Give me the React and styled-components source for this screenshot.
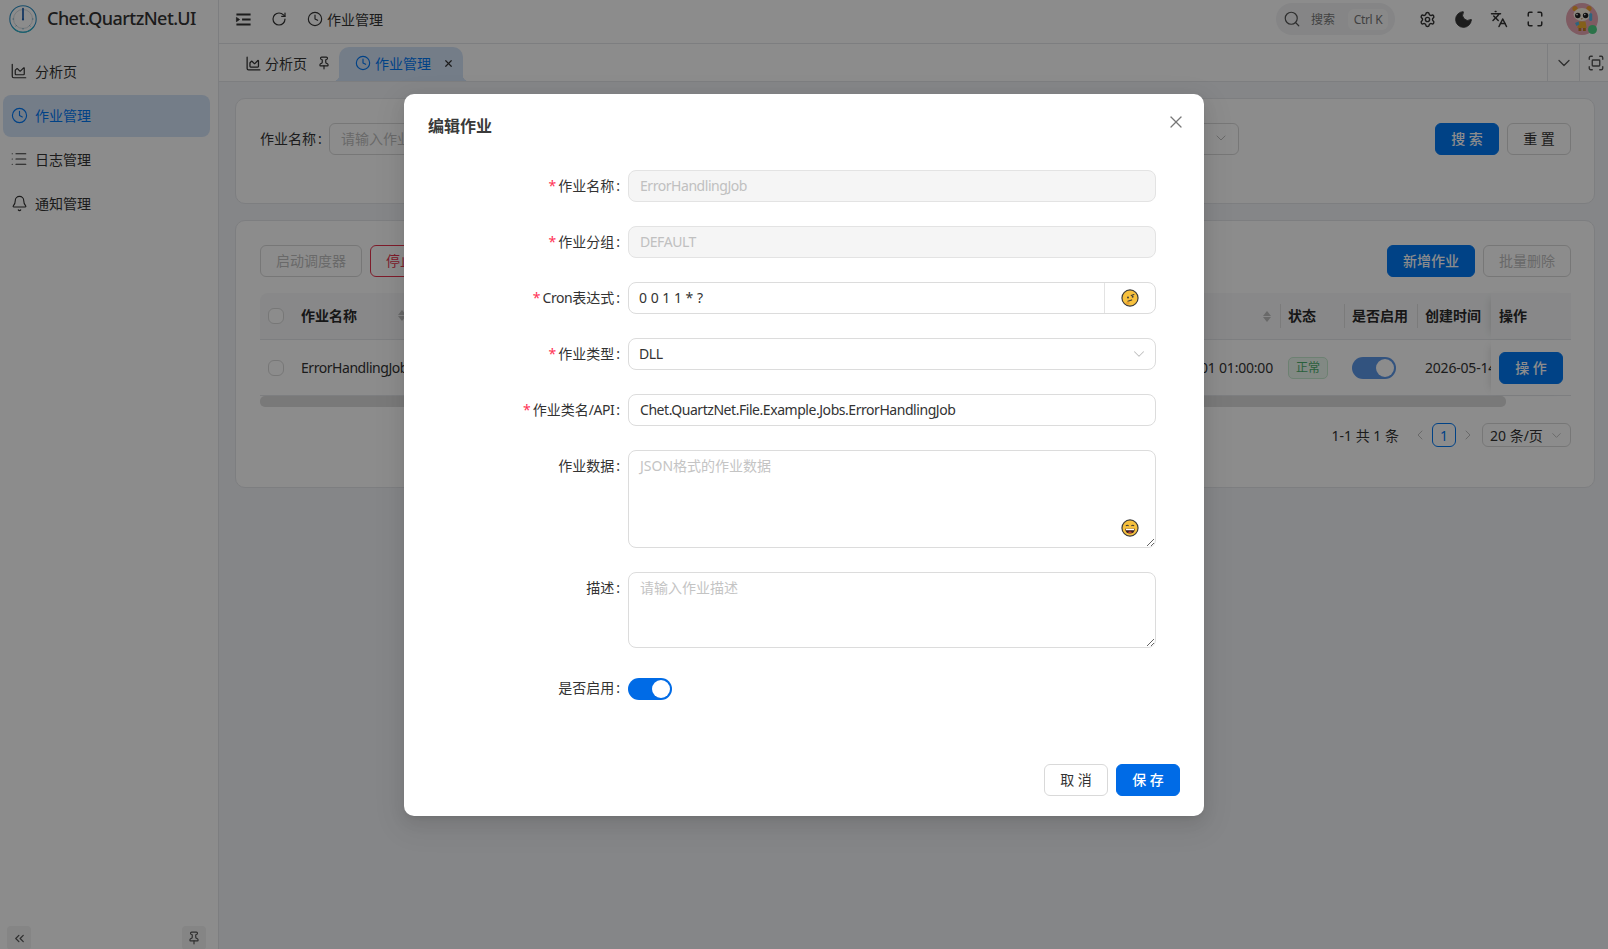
import React from 'react';
import styled, { createGlobalStyle } from 'styled-components';
import { ChartArea, Clock, List, Bell, RotateCw, Pin, Search, Settings, Moon, Languages, Maximize, Fullscreen, ChevronsLeft, ChevronDown, ChevronLeft, ChevronRight, X } from 'lucide-react';

const FONT = `"Noto Sans", "Noto Sans CJK SC", sans-serif`;
const PRIMARY = '#006be6';
const PRIMARY_BG = '#0078f5';
const TIGHT = '-0.45px';

const Global = createGlobalStyle`
  html, body { margin: 0; height: 100%; overflow: hidden; }
  #root { height: 100%; }
  * { box-sizing: border-box; }
  body { font-family: ${FONT}; font-size: 14px; color: #333; background: #f2f4f7; }
  input, textarea { font-family: ${FONT}; }
`;

const Shell = styled.div`display: flex; height: 949px; position: relative; overflow: hidden;`;
const Sidebar = styled.aside`
  width: 219px; flex: none; background: #fff; border-right: 1px solid #e4e6ea;
  display: flex; flex-direction: column; height: 100%;
`;
const Brand = styled.div`height: 51px; padding: 5px 0 0 9px; display: flex; align-items: flex-start; gap: 10px;`;
const BrandName = styled.div`font-size: 18px; font-weight: 500; line-height: 26px; color: #333; letter-spacing: -0.55px;`;
const NavList = styled.nav`display: flex; flex-direction: column; gap: 2px; padding: 0 8px 0 3px; flex: 1;`;
const NavItem = styled.div`
  height: 42px; display: flex; align-items: center; gap: 9px; padding: 0 0 2px 9px; border-radius: 8px;
  background: ${p => p.$active ? '#d4e3f8' : 'transparent'};
  color: ${p => p.$active ? PRIMARY_BG : '#333'};
`;
const IconSlot = styled.span`width: 14px; flex: none; display: flex; justify-content: center; svg { flex: none; }`;
const SideFoot = styled.div`display: flex; justify-content: space-between; padding: 0 12px 0 7px; height: 23px;`;
const FootBtn = styled.div`
  width: 24px; height: 24px; border-radius: 4px; background: #f2f2f2; color: #555;
  display: flex; align-items: center; justify-content: center;
`;

const Main = styled.div`flex: 1; min-width: 0; display: flex; flex-direction: column;`;
const Header = styled.header`
  height: 44px; flex: none; background: #fff; border-bottom: 1px solid #e4e6ea;
  display: flex; align-items: center; padding: 0 10px 5px 6px;
`;
const HeadIcon = styled.div`
  width: 36px; display: flex; align-items: center; justify-content: center; color: #333; flex: none;
`;
const Crumb = styled.div`display: flex; align-items: center; gap: 4px; margin-left: 10px; color: #333; padding-bottom: 1px;`;
const Spacer = styled.div`flex: 1;`;
const SearchPill = styled.div`
  width: 119px; height: 32px; border-radius: 16px; background: #f2f3f5; display: flex; align-items: center;
  padding: 0 7px 0 7px; margin-right: 14px; color: #555;
`;
const SearchText = styled.span`font-size: 12px; margin-left: 10px; color: #777;`;
const Kbd = styled.span`
  margin-left: auto; width: 40px; height: 21px; border-radius: 6px; background: #fafafa; color: #777; font-size: 12px;
  display: flex; align-items: center; justify-content: center; white-space: nowrap; letter-spacing: -.3px;
`;
const AvatarWrap = styled.div`position: relative; width: 32px; height: 32px; margin-left: 13px; flex: none;`;
const AvatarDot = styled.span`
  position: absolute; right: 1px; bottom: 1px; width: 9px; height: 9px; border-radius: 50%; background: #4fd186;
`;

const TabBar = styled.div`height: 38px; flex: none; background: #fff; border-bottom: 1px solid #e4e6ea; display: flex; align-items: flex-end;`;
const Tabs = styled.div`flex: 1; display: flex; align-items: flex-end; padding-left: 27px; height: 100%;`;
const PlainTab = styled.div`display: flex; align-items: center; height: 34px; gap: 5px; width: 93px; padding-bottom: 2px; color: #333;`;
const ActiveTab = styled.div`
  position: relative; height: 34px; width: 124px; background: #d4e3f8; color: ${PRIMARY_BG}; display: flex; align-items: center;
  padding: 0 0 2px 17px; gap: 5px; border-radius: 10px 10px 0 0;
  &::before, &::after { content: ''; position: absolute; bottom: 0; width: 6px; height: 6px; }
  &::before { left: -6px; background: radial-gradient(circle at 0 0, transparent 6px, #d4e3f8 6.5px); }
  &::after { right: -6px; background: radial-gradient(circle at 100% 0, transparent 6px, #d4e3f8 6.5px); }
`;
const TabClose = styled.span`position: absolute; right: 9px; top: 11px; color: #333; display: flex;`;
const TabTool = styled.div`
  width: ${p => p.$w}px; height: 100%; border-left: 1px solid #e4e6ea; display: flex; align-items: center; justify-content: center; color: #555; flex: none;
  padding-left: ${p => p.$pl || 0}px;
`;

const Content = styled.main`flex: 1; padding: 16px 13px 0 16px; display: flex; flex-direction: column; gap: 16px; min-height: 0;`;
const Card = styled.section`
  background: #fff; border: 1px solid #e4e6ea; border-radius: 10px; padding: 24px 23px 24px 24px; height: ${p => p.$h}px;
`;
const FilterRow = styled.div`display: flex; align-items: center; gap: 8px;`;
const FilterLabel = styled.span`white-space: nowrap; width: 65px; margin-right: -4px; flex: none; color: #333; padding-bottom: 2px;`;
const FilterInput = styled.div`
  flex: 1; height: 32px; border: 1px solid #d9d9d9; border-radius: 6px; padding: 0 9px 2px 11px; color: #bfbfbf;
  display: flex; justify-content: space-between; align-items: center; white-space: nowrap;
`;
const FilterGap = styled.div`width: ${p => p.$w}px; flex: none;`;
const Btn = styled.button`
  height: 32px; width: ${p => p.$w || 64}px; flex: none; border-radius: 6px; font: 14px ${FONT}; padding: 0 0 2px; cursor: pointer;
  font-weight: ${p => p.$primary ? 500 : 400};
  background: ${p => p.$primary ? (p.$modal ? PRIMARY : PRIMARY_BG) : '#fff'};
  color: ${p => p.$primary ? '#fff' : p.$danger ? '#e5344f' : p.$disabled ? '#bfbfbf' : '#333'};
  border: 1px solid ${p => p.$primary ? (p.$modal ? PRIMARY : PRIMARY_BG) : p.$danger ? '#e5344f' : '#d9d9d9'};
`;
const Toolbar = styled.div`display: flex; align-items: center; gap: 8px; margin-bottom: 16px;`;
const GridRow = styled.div`
  display: grid; grid-template-columns: 33px 123px minmax(0, 1fr) 64px 73px 74px 80px;
  height: ${p => p.$h}px; align-items: center; border-bottom: 1px solid #e4e6ea;
  background: ${p => p.$head ? '#f7f8f9' : '#fff'}; border-radius: ${p => p.$head ? '8px 8px 0 0' : '0'};
`;
const Cell = styled.div`
  padding-left: ${p => p.$pl ?? 8}px; padding-bottom: ${p => p.$head ? 2 : 0}px; white-space: nowrap; overflow: hidden; height: 100%; display: flex; align-items: center;
  position: relative; font-weight: ${p => p.$head ? 600 : 400}; color: ${p => p.$head ? '#2b2b2b' : '#333'};
  justify-content: ${p => p.$end ? 'flex-end' : 'flex-start'};
  letter-spacing: ${p => p.$tight ? TIGHT : p.$digits ? '-.2px' : 'normal'};
`;
const HeadSep = styled.span`position: absolute; left: 0; top: 11px; bottom: 11px; width: 1px; background: #e0e0e0;`;
const Fixed = styled(Cell)`
  overflow: visible; box-shadow: -6px 0 8px -6px rgba(0,0,0,.15); background: ${p => p.$head ? '#f7f8f9' : '#fff'};
`;
const Check = styled.span`width: 16px; height: 16px; border: 1px solid #d9d9d9; border-radius: 6px; background: #fff; display: block; margin-left: 8px;`;
const Sorter = styled.span`display: flex; flex-direction: column; margin-left: auto; margin-right: ${p => p.$mr}px; gap: 1px;`;
const Caret = styled.span`
  width: 0; height: 0; border-left: 4.5px solid transparent; border-right: 4.5px solid transparent;
  ${p => p.$up ? 'border-bottom: 5px solid #bfbfbf;' : 'border-top: 5px solid #bfbfbf;'}
`;
const NextFire = styled.span`margin-right: 7px;`;
const Tag = styled.span`
  width: 40px; height: 22px; border: 1px solid #c6ecd0; background: #edf9f0; color: #4caf6e; font-size: 12px; border-radius: 5px; padding-bottom: 1px;
  display: flex; align-items: center; justify-content: center;
`;
const Track = styled.span`
  width: 44px; height: 22px; border-radius: 11px; background: ${p => p.$soft ? '#5c97e8' : PRIMARY};
  display: flex; align-items: center; justify-content: flex-end; padding-right: 2px; flex: none;
`;
const Knob = styled.span`width: 18px; height: 18px; border-radius: 50%; background: #fff;`;
const ScrollTrack = styled.div`height: 11px; margin-right: 65px; background: #dcdcdc; border-radius: 5px;`;
const Pager = styled.div`display: flex; align-items: center; height: 24px; margin-top: 16px; justify-content: flex-end; color: #333;`;
const PagerText = styled.span`margin-right: 9px;`;
const PagerNav = styled.span`width: 24px; display: flex; justify-content: center; color: #bfbfbf;`;
const PageNum = styled.span`
  width: 24px; height: 24px; border: 1px solid ${PRIMARY_BG}; border-radius: 6px; color: ${PRIMARY_BG};
  display: flex; align-items: center; justify-content: center;
`;
const PageSize = styled.span`
  width: 89px; height: 24px; border: 1px solid #d9d9d9; border-radius: 6px; margin-left: 2px; padding: 0 6px 0 7px;
  display: flex; align-items: center; justify-content: space-between; white-space: nowrap;
`;

const Mask = styled.div`position: absolute; inset: 0; background: rgba(0,0,0,.45);`;
const Modal = styled.div`
  position: absolute; left: 404px; top: 94px; width: 800px; height: 722px; background: #fff; border-radius: 10px;
  box-shadow: 0 6px 16px rgba(0,0,0,.08), 0 3px 6px -4px rgba(0,0,0,.12), 0 9px 28px 8px rgba(0,0,0,.05);
  padding: 20px 24px; display: flex; flex-direction: column;
`;
const ModalClose = styled.span`position: absolute; right: 18px; top: 18px; color: #777; display: flex;`;
const ModalTitle = styled.h2`margin: 0; font-size: 16px; font-weight: 600; line-height: 24px; color: #3a3a3a;`;
const Form = styled.div`margin-top: 32px; display: flex; flex-direction: column; gap: 24px; flex: 1;`;
const FormRow = styled.div`display: grid; grid-template-columns: 192px 528px; column-gap: 8px; align-items: start;`;
const Label = styled.label`text-align: right; line-height: 32px; color: #333; white-space: nowrap;`;
const Req = styled.span`color: #ff3355; margin-right: 2px;`;
const Colon = styled.span`margin-left: 2px;`;
const Latin = styled.span`letter-spacing: ${TIGHT};`;
const TextField = styled.input`
  width: 100%; height: 32px; border: 1px solid ${p => p.disabled ? '#e3e3e3' : '#dcdcdc'}; border-radius: 8px; padding: 0 10px 1px 11px; font-size: 14px; outline: none;
  background: ${p => p.disabled ? '#f5f5f5' : '#fff'}; color: ${p => p.disabled ? '#c0c0c0' : '#333'}; letter-spacing: ${TIGHT};
  &:disabled { -webkit-text-fill-color: #c0c0c0; }
`;
const Group = styled.div`display: flex; height: 32px; border: 1px solid #dcdcdc; border-radius: 8px;`;
const GroupInput = styled.input`flex: 1; min-width: 0; border: 0; outline: none; background: transparent; padding: 0 10px 1px; font-size: 14px; color: #333;`;
const Addon = styled.div`width: 51px; border-left: 1px solid #e3e3e3; display: flex; align-items: center; justify-content: center;`;
const SelectBox = styled.div`
  height: 32px; border: 1px solid #dcdcdc; border-radius: 8px; padding: 0 7px 1px 10px; display: flex; align-items: center; justify-content: space-between; color: #333;
`;
const AreaWrap = styled.div`position: relative; height: ${p => p.$h}px;`;
const Area = styled.textarea`
  display: block; width: 100%; height: 100%; border: 1px solid #dcdcdc; border-radius: 8px; padding: 4px 11px; font-size: 14px; line-height: 22px; outline: none; resize: vertical; color: #333;
  &::placeholder { color: #c4c4c4; }
`;
const AreaEmoji = styled.span`position: absolute; right: 17px; bottom: 11px; display: flex;`;
const SwitchSlot = styled.div`height: 32px; padding-top: 1px; display: flex; align-items: center;`;
const Footer = styled.div`display: flex; justify-content: flex-end; gap: 8px;`;

const Logo = () => (
  <svg width="28" height="28" viewBox="0 0 28 28" fill="none" style={{ flex: 'none' }}>
    <circle cx="14" cy="14" r="13.2" stroke="#2b8fc4" strokeWidth="1.1" />
    <path d="M3.5 22a13 13 0 0 0 21 0" stroke="#35b6c9" strokeWidth="1.2" />
    <circle cx="14" cy="14" r="9.5" stroke="#b8c6cf" strokeWidth=".6" />
    <path d="M14 24.5v-1.6M3.5 14h1.6M24.5 14h-1.6M6.6 21.4l1.1-1.1M21.4 21.4l-1.1-1.1" stroke="#5f9fc0" strokeWidth=".8" />
    <path d="M14 3.5V14" stroke="#1d5fb0" strokeWidth="1.7" strokeLinecap="round" />
    <circle cx="14" cy="14.4" r="1.1" fill="#1d5fb0" />
  </svg>
);

const MenuFold = () => (
  <svg width="17" height="17" viewBox="0 0 24 24" fill="none" stroke="#333" strokeWidth="2.6">
    <path d="M2 5h20M10 12h12M2 19h20" />
    <path d="M2 9l4.5 3L2 15z" fill="#333" strokeWidth="1" />
  </svg>
);

const Avatar = () => (
  <svg width="32" height="32" viewBox="0 0 32 32">
    <circle cx="16" cy="16" r="16" fill="#e8a6b2" />
    <circle cx="9" cy="5.5" r="2.6" fill="#f2a530" />
    <circle cx="23" cy="5.5" r="2.6" fill="#f2a530" />
    <ellipse cx="16" cy="11.5" rx="8.5" ry="6.5" fill="#fbf4e4" />
    <circle cx="11.8" cy="12.5" r="2.7" fill="#1f1f1f" />
    <circle cx="19.6" cy="12.5" r="2.7" fill="#1f1f1f" />
    <circle cx="11" cy="11.6" r=".8" fill="#fff" />
    <circle cx="18.8" cy="11.6" r=".8" fill="#fff" />
    <path d="M14.6 15.4h2.4l-1.2 1.2z" fill="#a5541e" />
    <path d="M12.5 18.5h7l1.2 6.5h-9.4z" fill="#f0b030" />
    <path d="M9 20l3.5-1.5 1 3-3 1.5z" fill="#53b6e6" />
    <rect x="23.2" y="10" width="3" height="8" rx="1.5" fill="#53b6e6" />
    <path d="M12.5 25h2.8v3h-2.8zM17 25h2.8v3H17z" fill="#c07a24" />
  </svg>
);

const ThinkEmoji = () => (
  <svg width="18" height="18" viewBox="0 0 17 17">
    <circle cx="8.5" cy="8.5" r="7.6" fill="#f7c13e" stroke="#3a3a3a" strokeWidth="1.1" />
    <path d="M9.6 6.1l2.6-.8" stroke="#3a3a3a" strokeWidth="1" strokeLinecap="round" />
    <circle cx="11" cy="7.3" r=".9" fill="#3a3a3a" />
    <circle cx="6.6" cy="8" r=".9" fill="#3a3a3a" />
    <path d="M6.5 11.6l3.6-1.3" stroke="#3a3a3a" strokeWidth="1" strokeLinecap="round" />
    <path d="M4.4 13.6c.4-1.5 2-1.8 3.3-1.4l.6 1.6-2 1.2z" fill="#eaa22c" />
  </svg>
);

const GrinEmoji = () => (
  <svg width="18" height="18" viewBox="0 0 17 17">
    <circle cx="8.5" cy="8.5" r="7.6" fill="#f7c13e" stroke="#3a3a3a" strokeWidth="1.1" />
    <path d="M4.6 6.6q1.3-1.4 2.6 0M9.8 6.6q1.3-1.4 2.6 0" fill="none" stroke="#3a3a3a" strokeWidth="1" />
    <path d="M3.9 9.2h9.2q-.4 4.6-4.6 4.6t-4.6-4.6z" fill="#3a2020" />
    <path d="M4.6 9.3h7.8v1.3H4.6z" fill="#fff" />
    <path d="M6.5 12.6q2-1.4 4 0q-2 1.3-4 0z" fill="#e0433a" />
  </svg>
);

const NAV = [
  { Icon: ChartArea, text: '分析页', size: 18 },
  { Icon: Clock, text: '作业管理', active: true, size: 17 },
  { Icon: List, text: '日志管理', size: 18 },
  { Icon: Bell, text: '通知管理', size: 17 },
];

const FIELDS = [
  { label: '作业名称', value: 'ErrorHandlingJob' },
  { label: '作业分组', value: 'DEFAULT' },
];

export default function App() {
  return (
    <>
      <Global />
      <Shell>
        <Sidebar>
          <Brand><Logo /><BrandName>Chet.QuartzNet.UI</BrandName></Brand>
          <NavList>
            {NAV.map(({ Icon, text, active, size }) => (
              <NavItem key={text} $active={active}><IconSlot><Icon size={size} strokeWidth={1.6} /></IconSlot>{text}</NavItem>
            ))}
          </NavList>
          <SideFoot>
            <FootBtn><ChevronsLeft size={15} /></FootBtn>
            <FootBtn><Pin size={14} /></FootBtn>
          </SideFoot>
        </Sidebar>
        <Main>
          <Header>
            <HeadIcon><MenuFold /></HeadIcon>
            <HeadIcon><RotateCw size={16} strokeWidth={1.8} /></HeadIcon>
            <Crumb><Clock size={16} strokeWidth={1.7} />作业管理</Crumb>
            <Spacer />
            <SearchPill><Search size={18} strokeWidth={1.6} /><SearchText>搜索</SearchText><Kbd>Ctrl K</Kbd></SearchPill>
            <HeadIcon><Settings size={17} strokeWidth={2} /></HeadIcon>
            <HeadIcon><Moon size={21} fill="#333" strokeWidth={1} /></HeadIcon>
            <HeadIcon><Languages size={18} strokeWidth={2} /></HeadIcon>
            <HeadIcon><Maximize size={18} strokeWidth={2} /></HeadIcon>
            <AvatarWrap><Avatar /><AvatarDot /></AvatarWrap>
          </Header>
          <TabBar>
            <Tabs>
              <PlainTab><IconSlot><ChartArea size={17} strokeWidth={1.8} /></IconSlot>分析页<Pin size={14} style={{ marginLeft: 5 }} /></PlainTab>
              <ActiveTab><IconSlot><Clock size={16} strokeWidth={1.7} /></IconSlot>作业管理<TabClose><X size={11} strokeWidth={2.6} /></TabClose></ActiveTab>
            </Tabs>
            <TabTool $w={32}><ChevronDown size={20} strokeWidth={1.5} /></TabTool>
            <TabTool $w={29} $pl={3}><Fullscreen size={18} strokeWidth={1.8} /></TabTool>
          </TabBar>
          <Content>
            <Card $h={106}>
              <FilterRow>
                <FilterLabel>作业名称<Colon>:</Colon></FilterLabel>
                <FilterInput>请输入作业名称</FilterInput>
                <FilterGap $w={188} />
                <FilterInput><span /><ChevronDown size={16} strokeWidth={1.5} /></FilterInput>
                <FilterGap $w={180} />
                <Btn $primary>搜 索</Btn>
                <Btn>重 置</Btn>
              </FilterRow>
            </Card>
            <Card $h={268}>
              <Toolbar>
                <Btn $w={102} $disabled>启动调度器</Btn>
                <Btn $w={102} $danger>停止调度器</Btn>
                <Spacer />
                <Btn $w={88} $primary>新增作业</Btn>
                <Btn $w={88} $disabled>批量删除</Btn>
              </Toolbar>
              <GridRow $h={47} $head>
                <Cell $pl={0}><Check /></Cell>
                <Cell $head>作业名称<Sorter $mr={10}><Caret $up /><Caret /></Sorter></Cell>
                <Cell $end><Sorter $mr={9}><Caret $up /><Caret /></Sorter></Cell>
                <Cell $head><HeadSep />状态</Cell>
                <Cell $head><HeadSep />是否启用</Cell>
                <Cell $head><HeadSep />创建时间</Cell>
                <Fixed $head>操作</Fixed>
              </GridRow>
              <GridRow $h={56}>
                <Cell $pl={0}><Check /></Cell>
                <Cell $tight>ErrorHandlingJob</Cell>
                <Cell $end $digits><NextFire>2026-06-01 01:00:00</NextFire></Cell>
                <Cell><Tag>正常</Tag></Cell>
                <Cell><Track $soft><Knob /></Track></Cell>
                <Cell $digits>2026-05-14</Cell>
                <Fixed><Btn $primary>操 作</Btn></Fixed>
              </GridRow>
              <ScrollTrack />
              <Pager>
                <PagerText>1-1 共 1 条</PagerText>
                <PagerNav><ChevronLeft size={16} strokeWidth={1.5} /></PagerNav>
                <PageNum>1</PageNum>
                <PagerNav><ChevronRight size={16} strokeWidth={1.5} /></PagerNav>
                <PageSize>20 条/页<ChevronDown size={15} color="#bfbfbf" strokeWidth={1.5} /></PageSize>
              </Pager>
            </Card>
          </Content>
        </Main>
        <Mask />
        <Modal>
          <ModalClose><X size={20} strokeWidth={1.5} /></ModalClose>
          <ModalTitle>编辑作业</ModalTitle>
          <Form>
            {FIELDS.map(f => (
              <FormRow key={f.label}>
                <Label><Req>*</Req>{f.label}<Colon>:</Colon></Label>
                <TextField disabled value={f.value} readOnly />
              </FormRow>
            ))}
            <FormRow>
              <Label><Req>*</Req><Latin>Cron</Latin>表达式<Colon>:</Colon></Label>
              <Group><GroupInput value="0 0 1 1 * ?" readOnly /><Addon><ThinkEmoji /></Addon></Group>
            </FormRow>
            <FormRow>
              <Label><Req>*</Req>作业类型<Colon>:</Colon></Label>
              <SelectBox><Latin>DLL</Latin><ChevronDown size={18} color="#bfbfbf" strokeWidth={1.4} /></SelectBox>
            </FormRow>
            <FormRow>
              <Label><Req>*</Req>作业类名<Latin>/API</Latin><Colon>:</Colon></Label>
              <TextField value="Chet.QuartzNet.File.Example.Jobs.ErrorHandlingJob" readOnly />
            </FormRow>
            <FormRow>
              <Label>作业数据<Colon>:</Colon></Label>
              <AreaWrap $h={98}><Area placeholder="JSON格式的作业数据" /><AreaEmoji><GrinEmoji /></AreaEmoji></AreaWrap>
            </FormRow>
            <FormRow>
              <Label>描述<Colon>:</Colon></Label>
              <AreaWrap $h={76}><Area placeholder="请输入作业描述" /></AreaWrap>
            </FormRow>
            <FormRow>
              <Label>是否启用<Colon>:</Colon></Label>
              <SwitchSlot><Track><Knob /></Track></SwitchSlot>
            </FormRow>
          </Form>
          <Footer>
            <Btn>取 消</Btn>
            <Btn $primary $modal>保 存</Btn>
          </Footer>
        </Modal>
      </Shell>
    </>
  );
}
